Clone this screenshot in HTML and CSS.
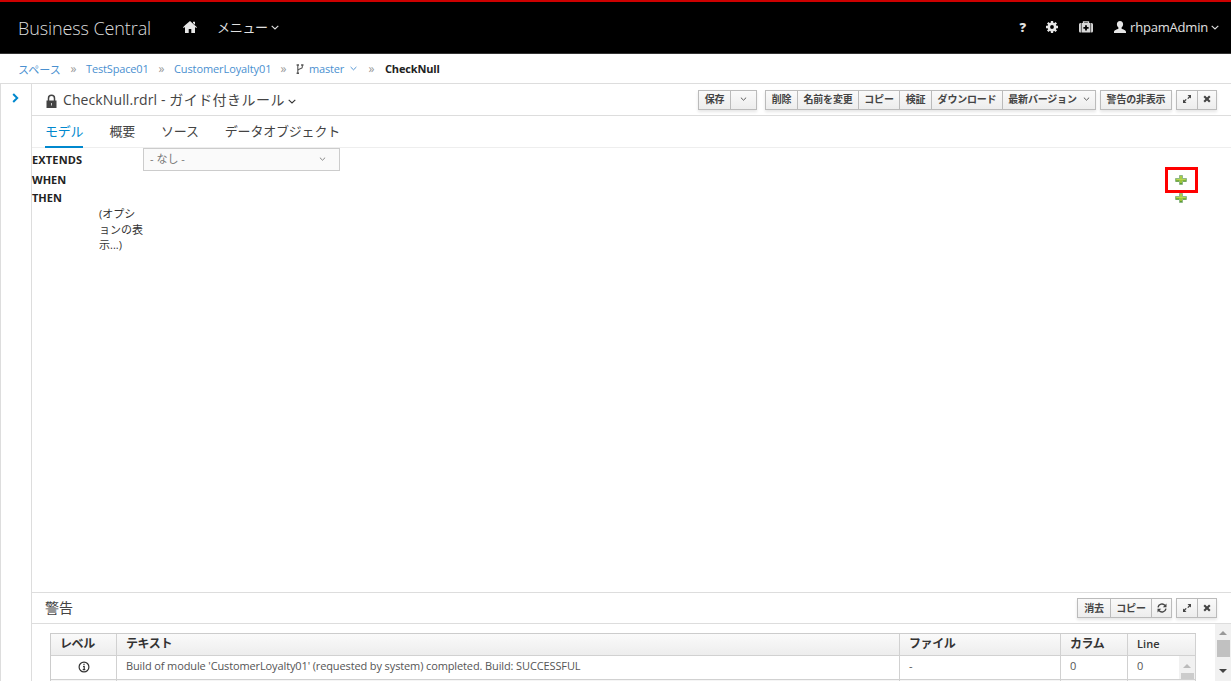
FILE: index.html
```html
<!DOCTYPE html>
<html lang="ja">
<head>
  <meta charset="UTF-8" />
  <title>Business Central</title>
  <link rel="stylesheet" href="styles.css">
</head>
<body>

<!-- Shared icons -->
<svg class="sprite" width="0" height="0">
  <symbol id="caret" viewBox="0 0 8 5"><path d="M.7.8 4 4 7.3.8" fill="none" stroke="currentColor" stroke-width="1.1"/></symbol>
  <symbol id="expand" viewBox="0 0 10 10"><path d="M5.5 1H9v3.5L7.9 3.4 6.2 5.1l-.9-.9L7 2.4zM4.5 9H1V5.500l1.100 1.100L3.800 4.900l.9.9L3 7.600z" fill="currentColor"/></symbol>
  <symbol id="close" viewBox="0 0 8 8"><path d="M1.200 1.200l5.600 5.600M6.800 1.200 1.200 6.800" fill="none" stroke="currentColor" stroke-width="2.100"/></symbol>
  <symbol id="plus" viewBox="0 0 12 12"><path d="M4.500 1.500h3v3h4v3h-4v3h-3v-3h-4v-3h4z" fill="#9cc53a" stroke="#8db887"/><path d="M6 2v4M1.500 5.500h9" fill="none" stroke="#b9d64f"/><path d="M5 9.500h2M8 7h3M1 7h3" stroke="#5f9a35"/></symbol>
</svg>

<header class="navbar">
  <div class="brand">Business Central</div>
  <svg class="home" viewBox="0 0 14 12"><path d="M7 0l7 6.200-.8.9L12 6.100V12H8.300V8H5.700v4H2V6.100L.8 7.100 0 6.200 2.300 4.100zM10 .8h2v3l-2-1.700z" fill="#e6e6e6"/></svg>
  <div class="menu">メニュー<svg class="caret"><use href="#caret"/></svg></div>
  <div class="nav-right">
    <span class="help">?</span>
    <svg class="gear" viewBox="0 0 12 12"><circle cx="6" cy="6" r="3.200" fill="none" stroke="#e6e6e6" stroke-width="2.600"/><path d="M6 0v2.500M6 9.500V12M0 6h2.500M9.500 6H12M1.800 1.800l1.700 1.700M8.500 8.500l1.700 1.700M10.200 1.800 8.500 3.500M3.500 8.500l-1.700 1.700" stroke="#e6e6e6" stroke-width="2.300"/></svg>
    <svg class="kit" viewBox="0 0 14 12"><path d="M4.500 2V.8h5V2" fill="none" stroke="#d8d8d8" stroke-width="1.300"/><path d="M1.900 2v9.500h-.6Q0 11.500 0 10V3.500Q0 2 1.300 2zM12.100 2v9.500h.6q1.300 0 1.300-1.500V3.500Q14 2 12.700 2zM2.500 2h9v9.500h-9z" fill="#d8d8d8"/><path d="M7 4.200v5.200M4.400 6.800h5.200" stroke="#000" stroke-width="1.800"/></svg>
    <svg class="user" viewBox="0 0 12 12"><path d="M6 0c2 0 3.100 1.300 3.100 3.300 0 1.500-.7 2.500-1.500 3.200v1.200c1.500.8 4.400 1.200 4.400 3.300v1H0v-1c0-2.100 2.900-2.500 4.400-3.300V6.500C3.600 5.800 2.900 4.800 2.900 3.300 2.900 1.300 4 0 6 0z" fill="#e6e6e6"/></svg>
    <span class="user-name">rhpamAdmin</span>
    <svg class="caret"><use href="#caret"/></svg>
  </div>
</header>

<nav class="breadcrumb">
  <a class="bc-space">スペース</a><i>»</i>
  <a class="bc-team">TestSpace01</a><i>»</i>
  <a class="bc-project">CustomerLoyalty01</a><i>»</i>
  <svg class="branch" viewBox="0 0 8 10"><path d="M1.800 1v8.500M6.300 1v2.200c0 1.800-4.500 1.500-4.500 3.600" fill="none" stroke="#555" stroke-width="1.100"/><path d="M.6 1h2.400M5.100 1h2.400M.6 9.300h2.400" stroke="#555" stroke-width="1.500"/></svg>
  <a class="bc-branch">master<svg class="caret"><use href="#caret"/></svg></a><i>»</i>
  <b>CheckNull</b>
</nav>

<div class="workspace">
  <aside class="side"><svg viewBox="0 0 7 10"><path d="M1.200 1 5.200 5l-4 4" fill="none" stroke="#0088ce" stroke-width="2"/></svg></aside>

  <main class="main">
    <section class="editor">
      <div class="title-bar">
        <svg class="lock" viewBox="0 0 11 14"><path d="M2.500 7V4.200a3 3 0 0 1 6 0V7" fill="none" stroke="#444" stroke-width="1.500"/><path d="M.5 6.500h10V14H.5z" fill="#444"/><path d="M5.500 9v2.500" stroke="#ccc"/></svg>
        <h1><span class="file">CheckNull.rdrl - </span><span class="kind">ガイド付きルール</span></h1>
        <svg class="caret"><use href="#caret"/></svg>
        <div class="toolbar">
          <div class="group">
            <button class="w33">保存</button><button class="w27"><svg class="caret"><use href="#caret"/></svg></button>
          </div>
          <div class="group gap-l">
            <button class="w33">削除</button><button class="w62">名前を変更</button><button class="w42">コピー</button><button class="w33">検証</button><button class="w72">ダウンロード</button><button class="w94">最新バージョン<svg class="caret"><use href="#caret"/></svg></button>
          </div>
          <div class="group"><button class="w72">警告の非表示</button></div>
          <div class="group">
            <button class="w22"><svg class="i10"><use href="#expand"/></svg></button><button class="w20"><svg class="i8"><use href="#close"/></svg></button>
          </div>
        </div>
      </div>

      <div class="tabs">
        <a class="active">モデル</a><a>概要</a><a>ソース</a><a>データオブジェクト</a>
      </div>

      <div class="rule">
        <div class="rule-row extends">
          <b>EXTENDS</b>
          <div class="select"><span>- なし -</span><svg class="caret"><use href="#caret"/></svg></div>
        </div>
        <div class="rule-row when"><b>WHEN</b><span class="add marked"><svg><use href="#plus"/></svg></span></div>
        <div class="rule-row then"><b>THEN</b><span class="add"><svg><use href="#plus"/></svg></span></div>
        <div class="options">(オプシ<br>ョンの表<br>示...)</div>
      </div>
    </section>

    <section class="alerts">
      <div class="alerts-bar">
        <h2>警告</h2>
        <div class="toolbar">
          <div class="group">
            <button class="w34">消去</button><button class="w42">コピー</button><button class="w21"><svg class="i10" viewBox="0 0 10 10"><path d="M1 4.300A4 4 0 0 1 8 2.500M9 5.700A4 4 0 0 1 2 7.500" fill="none" stroke="currentColor" stroke-width="1.400"/><path d="M9.500.5v3.700H5.800zM.5 9.500V5.800h3.700z" fill="currentColor"/></svg></button>
          </div>
          <div class="group">
            <button class="w22"><svg class="i10"><use href="#expand"/></svg></button><button class="w20"><svg class="i8"><use href="#close"/></svg></button>
          </div>
        </div>
      </div>
      <div class="alerts-body">
        <div class="grid">
          <div class="grid-row head"><div>レベル</div><div>テキスト</div><div>ファイル</div><div>カラム</div><div class="latin">Line</div></div>
          <div class="grid-row">
            <div class="level"><svg viewBox="0 0 12 12"><circle cx="6" cy="6" r="4.900" fill="none" stroke="#333" stroke-width="1.200"/><path d="M6 2.800v1.500M5 5.500h1.200v3M4.700 8.600h2.600" fill="none" stroke="#333" stroke-width="1.200"/></svg></div>
            <div class="message">Build of module 'CustomerLoyalty01' (requested by system) completed. Build: SUCCESSFUL</div><div>-</div><div>0</div>
            <div class="last">0<span class="scroll inner"><i class="up"></i><i class="thumb"></i></span></div>
          </div>
          <div class="grid-row next"><div></div><div></div><div></div><div></div><div></div></div>
        </div>
        <div class="scroll outer"><i class="up"></i><i class="thumb"></i><i class="down"></i></div>
      </div>
    </section>
  </main>
</div>

</body>
</html>
```
FILE: styles.css
```css
* { box-sizing: border-box; }
body {
  margin: 0;
  height: 681px;
  overflow: hidden;
  display: flex;
  flex-direction: column;
  font-family: "Open Sans", "Noto Sans CJK JP", sans-serif;
  font-size: 11px;
  color: #333;
  background: #fff;
}
svg { display: block; flex: none; }
.sprite { position: absolute; }
.caret { width: 8px; height: 5px; }
h1, h2 { margin: 0; font-weight: 400; color: #444; }

/* top bar */
.navbar {
  height: 54px;
  flex: none;
  display: flex;
  align-items: center;
  padding: 0 12px 2px 18px;
  background: #000;
  border-top: 2px solid #c00;
  border-bottom: 1px solid #333;
  color: #e0e0e0;
}
.brand {
  width: 165px;
  font-size: 18px;
  font-weight: 300;
  letter-spacing: -.1px;
  padding-top: 2px;
  color: #ddd;
  white-space: nowrap;
}
.home { width: 14px; height: 12px; }
.menu {
  display: flex;
  align-items: center;
  gap: 3px;
  margin-left: 20px;
  font-size: 13px;
  letter-spacing: -.3px;
}
.navbar .caret { margin-top: 2px; }
.nav-right {
  margin-left: auto;
  display: flex;
  align-items: center;
}
.help { font-size: 13px; font-weight: 800; margin-right: 20px; }
.gear { width: 12px; height: 12px; margin-right: 21px; }
.kit { width: 14px; height: 12px; margin-right: 21px; }
.user { width: 12px; height: 12px; margin-right: 4px; }
.user-name { font-size: 13px; letter-spacing: -.2px; margin-right: 3px; }

/* breadcrumb */
.breadcrumb {
  height: 30px;
  flex: none;
  display: flex;
  align-items: center;
  padding: 0 0 0 18px;
  border-bottom: 1px solid #ddd;
}
.breadcrumb a { color: #4a90d0; white-space: nowrap; }
.breadcrumb i {
  width: 25px;
  text-align: center;
  font-style: normal;
  font-size: 12px;
  color: #999;
}
.bc-space { width: 43px; }
.bc-team { width: 63px; letter-spacing: -.15px; }
.bc-project { width: 97px; letter-spacing: -.1px; }
.branch { width: 8px; height: 10px; margin-right: 5px; }
.bc-branch { display: flex; align-items: center; gap: 6px; width: 50px; letter-spacing: -.2px; }
.bc-branch .caret { width: 7px; }
.breadcrumb b { color: #222; letter-spacing: -.15px; margin-left: 1px; }

/* workspace */
.workspace {
  flex: 1;
  min-height: 0;
  display: flex;
  border-left: 1px solid #ddd;
}
.side {
  width: 31px;
  padding: 9px 0 0 11px;
  border-right: 1px solid #ddd;
}
.side svg { width: 7px; height: 10px; }
.main {
  flex: 1;
  min-width: 0;
  display: flex;
  flex-direction: column;
}
.editor { flex: 1; min-height: 0; }
.title-bar {
  height: 32px;
  display: flex;
  align-items: center;
  padding: 0 14px 0 14px;
  border-bottom: 1px solid #ddd;
}
.lock { width: 11px; height: 14px; margin: 2px 6px 0 0; }
.title-bar h1 {
  font-size: 14px;
  line-height: 20px;
  white-space: nowrap;
  margin-right: 3px;
}
.file { letter-spacing: .1px; }
.kind { letter-spacing: .45px; }
.title-bar > .caret { margin-top: 3px; }

/* buttons */
.toolbar { margin-left: auto; display: flex; gap: 4px; }
.group { display: flex; box-shadow: 0 2px 3px rgba(0,0,0,.1); }
.gap-l { margin-left: 4px; }
.toolbar button {
  height: 20px;
  margin: 0 0 0 -1px;
  padding: 0 0 2px;
  display: flex;
  align-items: center;
  justify-content: center;
  gap: 6px;
  border: 1px solid #bbb;
  background: linear-gradient(#fafafa, #ededed);
  color: #444;
  font-family: inherit;
  font-size: 10px;
  font-weight: 600;
  letter-spacing: -.2px;
  white-space: nowrap;
}
.toolbar button:first-child { margin-left: 0; }
.toolbar .caret { width: 7px; height: 4px; }
.i10 { width: 10px; height: 10px; }
.i8 { width: 8px; height: 8px; }
.toolbar .i10, .toolbar .i8 { margin-top: 1px; }
.w20 { width: 20px; }
.w21 { width: 21px; }
.w22 { width: 22px; }
.w27 { width: 27px; }
.w33 { width: 33px; }
.w34 { width: 34px; }
.w42 { width: 42px; }
.w62 { width: 62px; }
.w72 { width: 72px; }
.w94 { width: 94px; }

/* tabs */
.tabs {
  height: 32px;
  display: flex;
  gap: 26px;
  padding-left: 13px;
  border-bottom: 1px solid #eee;
  font-size: 13px;
  letter-spacing: -.2px;
  color: #444;
}
.tabs a { height: 32px; line-height: 30px; }
.tabs .active { color: #0088ce; border-bottom: 2px solid #0088ce; }

/* guided rule */
.rule b { font-size: 11px; color: #222; padding-bottom: 1px; }
.rule-row { display: flex; align-items: center; }
.extends { height: 23px; }
.extends b { width: 111px; letter-spacing: .15px; }
.select {
  width: 197px;
  height: 23px;
  display: flex;
  align-items: center;
  justify-content: space-between;
  padding: 0 13px 3px 6px;
  border: 1px solid #ccc;
  background: #fafafa;
  color: #777;
}
.select .caret { width: 7px; height: 4px; margin-top: 2px; }
.when { height: 18px; }
.then { height: 17px; }
.add {
  margin-left: auto;
  width: 33px;
  display: flex;
  justify-content: center;
  margin-right: 34px;
}
.add svg { width: 12px; height: 12px; }
.when b, .then b { line-height: 17px; }
.marked {
  height: 26px;
  align-items: center;
  border: 3px solid #f00;
  margin-right: 33px;
  padding-right: 2px;
}
.options { margin-left: 67px; line-height: 15.500px; }

/* alerts */
.alerts { height: 89px; flex: none; border-top: 1px solid #ddd; }
.alerts-bar {
  height: 31px;
  display: flex;
  align-items: center;
  padding: 0 14px 0 13px;
  border-bottom: 1px solid #ddd;
}
.alerts-bar h2 { font-size: 14px; line-height: 20px; }
.alerts-body { height: 57px; display: flex; justify-content: space-between; }
.grid {
  width: 1146px;
  margin: 9px 0 0 18px;
  border-left: 1px solid #ccc;
  border-top: 1px solid #ccc;
}
.grid-row {
  display: grid;
  grid-template-columns: 66px 783px 161px 67px 68px;
  grid-template-rows: 100%;
  height: 24px;
}
.grid-row > div {
  border-right: 1px solid #d1d1d1;
  border-bottom: 1px solid #d1d1d1;
  padding-left: 9px;
  line-height: 20px;
  color: #555;
  white-space: nowrap;
}
.grid-row.head { height: 22px; }
.grid-row.head > div {
  background: linear-gradient(#fafafa, #ededed);
  color: #333;
  font-size: 12px;
  font-weight: 600;
  letter-spacing: -.4px;
  line-height: 20px;
}
.grid-row.head > .latin { font-size: 11px; letter-spacing: .1px; line-height: 19px; }
.grid-row > .message { letter-spacing: -.12px; }
.grid .level { padding: 5px 0 0 27px; }
.level svg { width: 12px; height: 12px; }
.grid-row.next { height: 2px; background: #f5f5f5; overflow: hidden; }
.grid-row .last { display: flex; justify-content: space-between; }

.scroll {
  width: 16px;
  display: flex;
  flex-direction: column;
  align-items: center;
  background: #f1f1f1;
}
.up { border: 4px solid transparent; border-top: 0; border-bottom: 4px solid #999; }
.down { border: 4px solid transparent; border-bottom: 0; border-top: 4px solid #444; }
.outer { padding-top: 7px; }
.outer .thumb { width: 13px; height: 17px; background: #c1c1c1; margin: 5px 0 12px; }
.inner { padding-top: 8px; overflow: hidden; }
.inner .up { border-bottom-color: #bbb; }
.inner .thumb { width: 13px; height: 8px; flex: none; background: #ccc; margin-top: 5px; }
```
